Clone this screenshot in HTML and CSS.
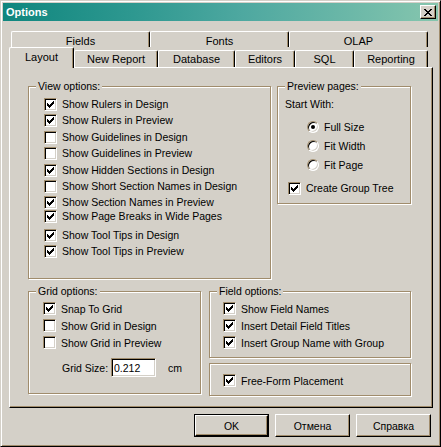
FILE: index.html
```html
<!DOCTYPE html>
<html>
<head>
<meta charset="utf-8">
<link rel="stylesheet" href="styles.css">
</head>
<body>
<div class="window">
  <div class="titlebar">
    <span class="title">Options</span>
    <span class="close">
      <svg width="8" height="7" viewBox="0 0 8 7" shape-rendering="crispEdges">
        <rect x="0" y="0" width="2" height="1"/><rect x="6" y="0" width="2" height="1"/>
        <rect x="1" y="1" width="2" height="1"/><rect x="5" y="1" width="2" height="1"/>
        <rect x="2" y="2" width="4" height="1"/>
        <rect x="3" y="3" width="2" height="1"/>
        <rect x="2" y="4" width="4" height="1"/>
        <rect x="1" y="5" width="2" height="1"/><rect x="5" y="5" width="2" height="1"/>
        <rect x="0" y="6" width="2" height="1"/><rect x="6" y="6" width="2" height="1"/>
      </svg>
    </span>
  </div>

  <div class="tabs-top">
    <div class="tab tab-wide">Fields</div>
    <div class="tab tab-wide">Fonts</div>
    <div class="tab tab-wide">OLAP</div>
  </div>
  <div class="tabs-bottom">
    <div class="tab sel w-layout">Layout</div>
    <div class="tab w-newrep">New Report</div>
    <div class="tab w-db">Database</div>
    <div class="tab w-ed">Editors</div>
    <div class="tab w-sql">SQL</div>
    <div class="tab w-rep">Reporting</div>
  </div>

  <div class="panel">
    <div class="row-upper">
      <fieldset class="grp view">
        <legend>View options:</legend>
        <div class="body view-body">
          <div class="opt"><span class="cb on"></span>Show Rulers in Design</div>
          <div class="opt"><span class="cb on"></span>Show Rulers in Preview</div>
          <div class="opt mt1"><span class="cb"></span>Show Guidelines in Design</div>
          <div class="opt"><span class="cb"></span>Show Guidelines in Preview</div>
          <div class="opt mt1"><span class="cb on"></span>Show Hidden Sections in Design</div>
          <div class="opt"><span class="cb"></span>Show Short Section Names in Design</div>
          <div class="opt"><span class="cb on"></span>Show Section Names in Preview</div>
          <div class="opt mtn2"><span class="cb on"></span>Show Page Breaks in Wide Pages</div>
          <div class="opt mt3"><span class="cb on"></span>Show Tool Tips in Design</div>
          <div class="opt"><span class="cb on"></span>Show Tool Tips in Preview</div>
        </div>
      </fieldset>
      <fieldset class="grp preview">
        <legend>Preview pages:</legend>
        <div class="body preview-body">
          <div class="opt start">Start With:</div>
          <div class="opt radio-row first"><span class="rb on"></span>Full Size</div>
          <div class="opt radio-row"><span class="rb"></span>Fit Width</div>
          <div class="opt radio-row"><span class="rb"></span>Fit Page</div>
          <div class="opt tree"><span class="cb on"></span>Create Group Tree</div>
        </div>
      </fieldset>
    </div>
    <div class="row-lower">
      <fieldset class="grp grid">
        <legend>Grid options:</legend>
        <div class="body grid-body">
          <div class="opt h17"><span class="cb on"></span>Snap To Grid</div>
          <div class="opt h17"><span class="cb"></span>Show Grid in Design</div>
          <div class="opt h17"><span class="cb"></span>Show Grid in Preview</div>
          <div class="size-row">
            <span class="size-label">Grid Size:</span>
            <input class="field-input" type="text" value="0.212" readonly>
            <span class="unit">cm</span>
          </div>
        </div>
      </fieldset>
      <div class="col-right">
        <fieldset class="grp field">
          <legend>Field options:</legend>
          <div class="body field-body">
            <div class="opt h17"><span class="cb on"></span>Show Field Names</div>
            <div class="opt h17"><span class="cb on"></span>Insert Detail Field Titles</div>
            <div class="opt h17"><span class="cb on"></span>Insert Group Name with Group</div>
          </div>
        </fieldset>
        <div class="grp free">
          <div class="opt h17"><span class="cb on"></span>Free-Form Placement</div>
        </div>
      </div>
    </div>
  </div>

  <div class="buttons">
    <div class="btn default"><span class="btn-in">OK</span></div>
    <div class="btn"><span class="btn-in">Отмена</span></div>
    <div class="btn"><span class="btn-in">Справка</span></div>
  </div>
</div>
</body>
</html>
```

FILE: styles.css
```css
:root {
  --face: #d4d0c8;
  --shadow: #a08c6c;
  --dark: #000000;
  --light: #ffffff;
}

html, body {
  margin: 0;
  padding: 0;
  background: var(--face);
}

body {
  font-family: "Liberation Sans", Arial, sans-serif;
  font-size: 10.5px;
  color: #000;
}

.window {
  width: 441px;
  height: 447px;
  box-sizing: border-box;
  border: 1px solid;
  border-color: var(--face) var(--dark) var(--dark) var(--face);
  box-shadow: inset 1px 1px var(--light), inset -1px -1px var(--shadow);
  padding: 2px;
  background: var(--face);
}

.titlebar {
  height: 18px;
  display: flex;
  align-items: center;
  justify-content: space-between;
  padding-left: 3px;
  padding-right: 2px;
  background: linear-gradient(90deg, #0f867e 0%, #2e9890 30%, #4ea8a0 55%, #6cb8a8 80%, #86c6ae 100%);
}

.title {
  color: #fff;
  font-weight: bold;
  font-size: 11px;
  line-height: 13px;
}

.close {
  width: 16px;
  height: 14px;
  box-sizing: border-box;
  background: var(--face);
  border: 1px solid;
  border-color: var(--light) var(--dark) var(--dark) var(--light);
  box-shadow: inset -1px -1px var(--shadow);
  display: flex;
  align-items: center;
  justify-content: center;
}

.close svg {
  display: block;
  fill: #000;
  margin-left: -1px;
}

/* tabs */
.tabs-top {
  display: flex;
  margin-top: 10px;
  margin-left: 8px;
  height: 16px;
}

.tabs-bottom {
  display: flex;
  align-items: flex-end;
  margin-left: 6px;
  height: 20px;
}

.tab {
  box-sizing: border-box;
  border-top: 1px solid var(--light);
  border-left: 1px solid var(--light);
  border-right: 1px solid var(--dark);
  border-radius: 2px 2px 0 0;
  box-shadow: inset -1px 0 var(--shadow);
  background: var(--face);
  text-align: center;
  line-height: 13px;
  font-size: 11px;
}

.tabs-top .tab {
  height: 16px;
  padding-top: 3px;
}

.tab-wide { width: 139px; }

.tabs-bottom .tab {
  height: 17px;
  padding-top: 2px;
}

.tabs-bottom .tab.sel {
  height: 21px;
  padding-top: 3px;
  margin-bottom: -1px;
  position: relative;
  z-index: 1;
}

.w-layout { width: 65px; }
.w-newrep { width: 84px; }
.w-db { width: 77px; }
.w-ed { width: 60px; }
.w-sql { width: 59px; }
.w-rep { width: 74px; }

.panel {
  box-sizing: border-box;
  width: 424px;
  height: 341px;
  margin-left: 6px;
  border: 1px solid;
  border-color: var(--light) var(--dark) var(--dark) var(--light);
  box-shadow: inset -1px -1px var(--shadow);
  padding: 12px 0 0 18px;
}

.row-upper,
.row-lower {
  display: flex;
  align-items: flex-start;
}

.row-lower {
  margin-top: 6px;
}

/* group boxes */
.grp {
  margin: 0;
  padding: 0;
  min-width: 0;
  border: 1px solid var(--shadow);
  box-shadow: inset 1px 1px var(--light), 1px 1px var(--light);
  box-sizing: border-box;
}

.grp legend {
  margin-left: 7px;
  padding: 0 2px;
  line-height: 13px;
  background: var(--face);
}

.view { width: 243px; }
.preview { width: 134px; margin-left: 6px; }
.grid { width: 173px; }
.col-right { width: 202px; margin-left: 8px; }
.field { width: 202px; }
.free {
  width: 202px;
  margin-top: 5px;
  padding: 8px 0 6px 13px;
}

.body { padding-top: 3px; }

.view-body { padding: 3px 0 19px 15px; }

.opt {
  display: flex;
  align-items: center;
  height: 16px;
  white-space: nowrap;
}

.h17 { height: 17px; }
.mt1 { margin-top: 1px; }
.mt3 { margin-top: 3px; }
.mtn2 { margin-top: -2px; }

.preview-body { padding: 3px 0 7px 0; }
.start { padding-left: 7px; }
.radio-row { height: 19px; margin-left: 29px; }
.radio-row.first { margin-top: 5px; }
.tree { margin-top: 6px; margin-left: 10px; }

.grid-body { padding: 2px 0 16px 14px; }
.field-body { padding: 2px 0 6px 13px; }

.size-row {
  display: flex;
  align-items: center;
  height: 19px;
  margin-top: 7px;
  margin-left: 19px;
}

.size-label { width: 49px; }

.field-input {
  box-sizing: border-box;
  width: 45px;
  height: 19px;
  margin: 0;
  padding: 0 0 0 2px;
  font-family: "Liberation Sans", Arial, sans-serif;
  font-size: 10.5px;
  color: #000;
  background: #fff;
  border: 1px solid;
  border-color: var(--shadow) var(--light) var(--light) var(--shadow);
  box-shadow: inset 1px 1px var(--dark), inset -1px -1px var(--face);
  outline: none;
}

.unit { margin-left: 12px; }

/* checkbox */
.cb {
  flex: none;
  width: 13px;
  height: 13px;
  box-sizing: border-box;
  margin-right: 5px;
  background: #fff;
  border: 1px solid;
  border-color: var(--shadow) var(--light) var(--light) var(--shadow);
  box-shadow: inset 1px 1px var(--dark), inset -1px -1px var(--face);
  position: relative;
}

.cb.on::after {
  content: "";
  position: absolute;
  left: 2px;
  top: 2px;
  width: 7px;
  height: 7px;
  background:
    linear-gradient(#000, #000) 0 2px / 1px 3px no-repeat,
    linear-gradient(#000, #000) 1px 3px / 1px 3px no-repeat,
    linear-gradient(#000, #000) 2px 4px / 1px 3px no-repeat,
    linear-gradient(#000, #000) 3px 3px / 1px 3px no-repeat,
    linear-gradient(#000, #000) 4px 2px / 1px 3px no-repeat,
    linear-gradient(#000, #000) 5px 1px / 1px 3px no-repeat,
    linear-gradient(#000, #000) 6px 0 / 1px 3px no-repeat;
}

/* radio */
.rb {
  flex: none;
  width: 12px;
  height: 12px;
  box-sizing: border-box;
  margin-right: 5px;
  border-radius: 50%;
  background: #fff;
  border: 1px solid;
  border-color: var(--shadow) var(--light) var(--light) var(--shadow);
  box-shadow: inset 1px 1px var(--dark), inset -1px -1px var(--face);
  position: relative;
}

.rb.on::after {
  content: "";
  position: absolute;
  left: 3px;
  top: 3px;
  width: 4px;
  height: 4px;
  border-radius: 50%;
  background: #000;
}

/* buttons */
.buttons {
  display: flex;
  justify-content: flex-end;
  gap: 6px;
  margin-top: 6px;
  padding-right: 7px;
}

.btn {
  box-sizing: border-box;
  width: 75px;
  height: 23px;
  display: flex;
  border: 1px solid;
  border-color: var(--light) var(--dark) var(--dark) var(--light);
  box-shadow: inset -1px -1px var(--shadow);
  background: var(--face);
}

.btn-in {
  flex: 1;
  display: flex;
  align-items: center;
  justify-content: center;
}

.btn.default {
  border: 1px solid var(--dark);
  box-shadow: none;
}

.btn.default .btn-in {
  border: 1px solid;
  border-color: var(--light) var(--dark) var(--dark) var(--light);
  box-shadow: inset -1px -1px var(--shadow);
}
```
